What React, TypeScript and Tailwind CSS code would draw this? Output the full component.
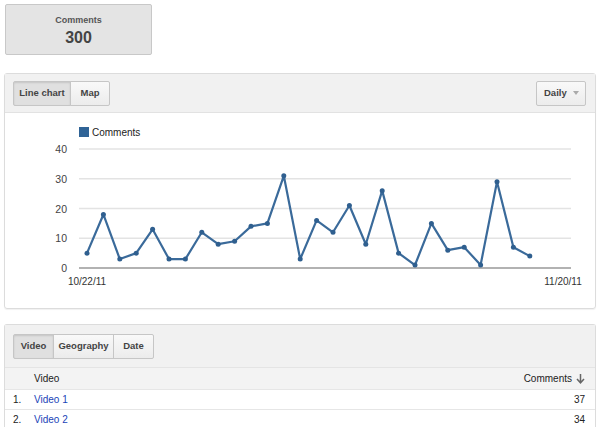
const DATA = [5, 18, 3, 5, 13, 3, 3, 12, 8, 9, 14, 15, 31, 3, 16, 12, 21, 8, 26, 5, 1, 15, 6, 7, 1, 29, 7, 4];

// chart geometry in px, relative to the svg box
const X0 = 86;
const STEP = 16.4;
const Y0 = 268;
const PER = 2.975;

const Btn = ({ label, w, active, first, last }: { label: string; w: string; active?: boolean; first?: boolean; last?: boolean }) => (
  <div
    className={`flex h-[25px] items-center justify-center border border-[#c6c6c6] text-[9.5px] font-bold text-[#444] ${w} ${
      active ? "bg-[#e0e0e0] shadow-[inset_0_1px_2px_rgba(0,0,0,0.12)]" : "bg-gradient-to-b from-[#f9f9f9] to-[#ececec]"
    } ${first ? "rounded-l-[2px]" : "-ml-px"} ${last ? "rounded-r-[2px]" : ""}`}
  >
    {label}
  </div>
);

const Chart = () => {
  const pts = DATA.map((v, i) => [X0 + i * STEP, Y0 - v * PER]);
  return (
    <svg width="592" height="195" viewBox="4 113 592 195" className="block">
      {[40, 30, 20, 10].map((v) => (
        <g key={v}>
          <line x1="78" x2="570" y1={Y0 - v * PER} y2={Y0 - v * PER} stroke="#e3e3e3" strokeWidth="1.5" />
          <text x="66" y={Y0 - v * PER + 4} textAnchor="end" fontSize="10.5" fill="#444">
            {v}
          </text>
        </g>
      ))}
      <line x1="78" x2="570" y1={Y0} y2={Y0} stroke="#999" strokeWidth="1.5" />
      <text x="66" y={Y0 + 4} textAnchor="end" fontSize="10.5" fill="#444">
        0
      </text>
      <text x="86" y="285" textAnchor="middle" fontSize="10" fill="#333">
        10/22/11
      </text>
      <text x="562" y="285" textAnchor="middle" fontSize="10" fill="#333">
        11/20/11
      </text>
      <rect x="78" y="127" width="10" height="10" fill="#2f6396" />
      <text x="91" y="136" fontSize="10" fill="#222">
        Comments
      </text>
      <polyline points={pts.map((p) => p.join(",")).join(" ")} fill="none" stroke="#3a6a9a" strokeWidth="2.2" strokeLinejoin="round" />
      {pts.map(([x, y], i) => (
        <circle key={i} cx={x} cy={y} r="2.5" fill="#2f5f8f" />
      ))}
    </svg>
  );
};

export default function App() {
  return (
    <div className="h-[427px] w-[600px] overflow-hidden bg-white font-['Liberation_Sans',Arial,sans-serif]">
      <div className="px-[5px] pt-[4px]">
        <div className="flex h-[51px] w-[147px] flex-col items-center justify-center rounded-[2px] border border-[#c8c8c8] bg-[#e4e4e4] pt-[3px]">
          <div className="text-[9px] font-bold leading-[12px] text-[#555]">Comments</div>
          <div className="mt-[2px] text-[16px] font-bold leading-[20px] text-[#444]">300</div>
        </div>
      </div>

      <div className="mx-[4px] mt-[18px] w-[592px] rounded-[3px] border border-[#dcdcdc] shadow-[0_1px_1px_rgba(0,0,0,0.06)]">
        <div className="flex h-[39px] items-center justify-between border-b border-[#e2e2e2] bg-[#f1f1f1] px-[8px]">
          <div className="flex">
            <Btn label="Line chart" w="w-[58px]" active first />
            <Btn label="Map" w="w-[40px]" last />
          </div>
          <div className="mr-[1px] flex h-[25px] w-[50px] items-center justify-between rounded-[2px] border border-[#c6c6c6] bg-gradient-to-b from-[#f9f9f9] to-[#ececec] pl-[7px] pr-[6px] text-[9.5px] font-bold text-[#444]">
            Daily
            <span className="h-0 w-0 border-x-[3px] border-t-[4px] border-x-transparent border-t-[#aaa]" />
          </div>
        </div>
        <Chart />
      </div>

      <div className="mx-[4px] mt-[15px] w-[592px] rounded-t-[3px] border border-b-0 border-[#dcdcdc]">
        <div className="flex h-[42px] items-center bg-[#f1f1f1] px-[8px]">
          <Btn label="Video" w="w-[41px]" active first />
          <Btn label="Geography" w="w-[61px]" />
          <Btn label="Date" w="w-[41px]" last />
        </div>
        <div className="flex h-[22px] items-center justify-between border-t border-[#e4e4e4] bg-[#f3f3f3] pl-[29px] pr-[10px] text-[10px] text-[#222]">
          <span>Video</span>
          <span className="flex items-center gap-[4px]">
            Comments
            <svg width="9" height="10" viewBox="0 0 9 10">
              <path d="M4.5 0v8.5M1 5l3.5 3.8L8 5" fill="none" stroke="#666" strokeWidth="1.5" />
            </svg>
          </span>
        </div>
        {[
          ["1.", "Video 1", "37"],
          ["2.", "Video 2", "34"],
        ].map(([n, t, c]) => (
          <div key={n} className="flex h-[20px] items-center border-t border-[#e6e6e6] pl-[8px] pr-[10px] text-[10px]">
            <span className="w-[21px] text-[#222]">{n}</span>
            <span className="flex-1 text-[#1a44b8]">{t}</span>
            <span className="text-[#222]">{c}</span>
          </div>
        ))}
      </div>
    </div>
  );
}
